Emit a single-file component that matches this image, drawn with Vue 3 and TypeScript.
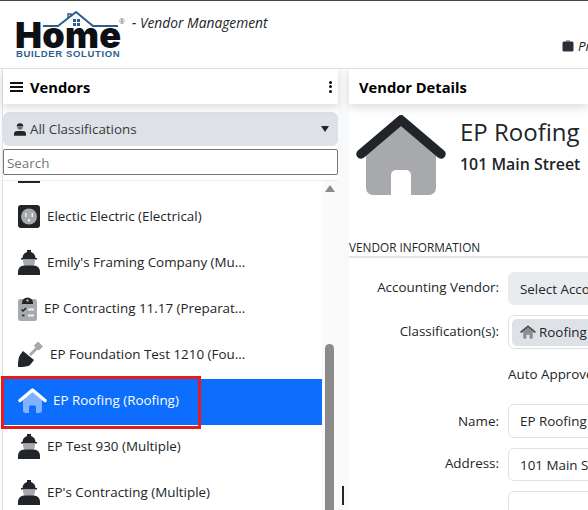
<script setup lang="ts">
type Row = { name: string; icon: string; gap: number; active?: boolean }
const rows: Row[] = [
  { name: 'Eagle Electric (Electrical)', icon: 'worker', gap: 7 },
  { name: 'Electic Electric (Electrical)', icon: 'outlet', gap: 7 },
  { name: "Emily's Framing Company (Mu...", icon: 'worker', gap: 7 },
  { name: 'EP Contracting 11.17 (Preparat...', icon: 'clipboard', gap: 7 },
  { name: 'EP Foundation Test 1210 (Fou...', icon: 'shovel', gap: 7 },
  { name: 'EP Roofing (Roofing)', icon: 'house', gap: 6, active: true },
  { name: 'EP Test 930 (Multiple)', icon: 'worker', gap: 7 },
  { name: "EP's Contracting (Multiple)", icon: 'worker', gap: 7 },
]
</script>

<template>
  <div class="page">
    <header class="top">
      <div class="logo">
        <div class="logo-word">Home</div>
        <svg class="roof" viewBox="0 0 110 22" width="110" height="22">
          <path d="M3 16H18L36 2L53 16H78" fill="none" stroke="#2a5f90" stroke-width="2" />
          <path d="M28 8V4H31V6" fill="none" stroke="#2a5f90" stroke-width="1.500" />
          <path d="M33 9h3v3h-3zM37 9h3v3h-3zM33 13h3v3h-3zM37 13h3v3h-3z" fill="#2a5f90" />
        </svg>
        <div class="logo-sub">BUILDER SOLUTION</div>
        <span class="reg">®</span>
      </div>
      <div class="app-title">- Vendor Management</div>
      <div class="top-right">
        <svg class="case" viewBox="0 0 12 12" width="12" height="12">
          <path d="M4 0h4v3H4z" fill="#a7a9ac" />
          <rect x="0.500" y="1.500" width="11" height="10" rx="1.500" fill="#2b3038" />
        </svg>
        <i>Projects</i>
      </div>
    </header>

    <main class="body">
      <section class="left">
        <div class="panel-head">
          <span class="burger"><b></b><b></b><b></b></span>
          <strong>Vendors</strong>
          <span class="dots"><b></b><b></b><b></b></span>
        </div>
        <div class="filter">
          <svg viewBox="0 0 22 25" width="12" height="14">
            <path d="M5 8a6 6 0 0 1 12 0z" fill="#212529" />
            <path d="M6 9h10a5 5 0 0 1-10 0z" fill="#6c7075" />
            <path d="M0 25v-3a6 6 0 0 1 6-6h10a6 6 0 0 1 6 6v3z" fill="#212529" />
          </svg>
          <span>All Classifications</span>
          <i class="caret"></i>
        </div>
        <input class="search" placeholder="Search" />
        <div class="list-wrap">
          <div class="list">
            <div v-for="r in rows" :key="r.name" class="row" :class="{ active: r.active }">
              <svg v-if="r.icon === 'worker'" viewBox="0 0 22 25" width="22" height="25">
                <path d="M4.500 8a6.500 6.500 0 0 1 4.500-6V0h4v2a6.500 6.500 0 0 1 4.500 6h1.500v1.500H3V8z" fill="#212529" />
                <path d="M5 9.500h12v2a6 6 0 0 1-12 0z" fill="#a7a9ac" />
                <path d="M0 25v-3.500a6 6 0 0 1 6-6h10a6 6 0 0 1 6 6V25z" fill="#212529" />
              </svg>
              <svg v-else-if="r.icon === 'outlet'" viewBox="0 0 22 23" width="22" height="23">
                <rect width="22" height="23" rx="3" fill="#212529" />
                <circle cx="11" cy="11.500" r="8" fill="#a7a9ac" />
                <path d="M7 8h1.500v4H7zM13.500 8H15v4h-1.500zM10 14h2v2.500h-2z" fill="#eee" />
              </svg>
              <svg v-else-if="r.icon === 'clipboard'" viewBox="0 0 19 25" width="19" height="25">
                <rect y="3" width="19" height="22" rx="2.500" fill="#a7a9ac" />
                <path d="M4 7a5.500 5.500 0 0 1 11 0v1H4z" fill="#212529" />
                <circle cx="9.500" cy="4.500" r="1.300" fill="#a7a9ac" />
                <path d="M3.500 13.500l1.500 1.500 3-3M4 19.500h2.500" fill="none" stroke="#212529" stroke-width="1.500" />
                <path d="M10 13.500h6M10 19.500h6" stroke="#eee" stroke-width="1.800" />
              </svg>
              <svg v-else-if="r.icon === 'shovel'" viewBox="0 0 25 25" width="25" height="25">
                <path d="M12 13L20 5" stroke="#a7a9ac" stroke-width="3" />
                <path d="M16.500 3.500L20 0l4.500 4.500L21 8l-2-1z" fill="#a7a9ac" stroke="#a7a9ac" stroke-width="1" />
                <path d="M5 9l11 9-4 5c-3 2-9 2-12 2 0-4 0-9 2-12z" fill="#212529" />
              </svg>
              <svg v-else viewBox="0 0 29 25" width="29" height="25">
                <path d="M5 12L14.500 3.500L24 12V22a3 3 0 0 1-3 3h-3v-6a1.500 1.500 0 0 0-1.500-1.500h-4A1.500 1.500 0 0 0 11 19v6H8a3 3 0 0 1-3-3z" fill="#7fb2ff" />
                <path d="M2 12.500L14.500 2L27 12.500" fill="none" stroke="#fff" stroke-width="3.500" stroke-linecap="round" stroke-linejoin="round" />
              </svg>
              <span :style="{ marginLeft: r.gap + 'px' }">{{ r.name }}</span>
            </div>
          </div>
          <div class="track">
            <i class="arrow"></i>
            <div class="thumb"></div>
          </div>
        </div>
        <div class="callout"></div>
      </section>

      <section class="right">
        <div class="panel-head"><strong>Vendor Details</strong></div>
        <div class="hero">
          <svg viewBox="0 0 90 80" width="90" height="80">
            <path d="M10 34L45 6L80 34V73a7 7 0 0 1-7 7H55V60a5 5 0 0 0-5-5H40a5 5 0 0 0-5 5v20H17a7 7 0 0 1-7-7z" fill="#a7a9ac" />
            <path d="M5 39L45 5L85 39" fill="none" stroke="#212529" stroke-width="9.500" stroke-linecap="round" stroke-linejoin="round" />
          </svg>
          <div class="hero-text">
            <h1>EP Roofing</h1>
            <p>101 Main Street</p>
          </div>
        </div>
        <h2 class="section">VENDOR INFORMATION</h2>
        <div class="form">
          <div class="f-row"><label class="l1">Accounting Vendor:</label><div class="ctl grey">Select Accounting Vendor</div></div>
          <div class="f-row">
            <label class="l2">Classification(s):</label>
            <div class="ctl box">
              <span class="chip">
                <svg viewBox="0 0 20 17" width="16" height="14">
                  <path d="M4 8L10 3L16 8V15.500a1.500 1.500 0 0 1-1.500 1.500H12v-5H8v5H5.500A1.500 1.500 0 0 1 4 15.500z" fill="#8a8d91" />
                  <path d="M1.500 8.500L10 1.500L18.500 8.500" fill="none" stroke="#495057" stroke-width="2.200" stroke-linecap="round" />
                </svg>
                Roofing
              </span>
            </div>
          </div>
          <div class="f-row auto"><label></label><span>Auto Approve</span></div>
          <div class="f-row name-row"><label class="l3">Name:</label><div class="ctl">EP Roofing</div></div>
          <div class="f-row addr-row"><label class="l1">Address:</label><div class="ctl">101 Main Street</div></div>
          <div class="f-row"><label></label><div class="ctl"></div></div>
        </div>
      </section>
    </main>
    <div class="cursor"></div>
  </div>
</template>

<style>
html, body { margin: 0; overflow: hidden; background: #fff; }
</style>

<style scoped>
.page {
  position: relative;
  width: 588px;
  height: 510px;
  overflow: hidden;
  font-family: "Open Sans", "Noto Sans", sans-serif;
  font-size: 13.4px;
  color: #212529;
  box-sizing: border-box;
  border-top: 1px solid #444;
}
.top {
  display: flex;
  height: 67px;
  border-bottom: 1px solid #e2e3e5;
  box-sizing: content-box;
}
.logo {
  position: relative;
  width: 108px;
  margin-left: 15px;
  flex: none;
}
.roof { position: absolute; left: 25px; top: 9px; }
.logo-word {
  position: absolute;
  left: 0;
  top: 12px;
  font: 900 36px/44px Inter, sans-serif;
  letter-spacing: 0.3px;
  color: #0d1014;
}
.logo-sub {
  position: absolute;
  left: 1px;
  top: 48px;
  font: 700 9.500px/10px "Liberation Sans", sans-serif;
  letter-spacing: 0.65px;
  color: #2a5f90;
  white-space: nowrap;
}
.reg { position: absolute; left: 104px; top: 17px; font-size: 7px; line-height: 8px; color: #666; }
.app-title {
  margin: 13px 0 0 9px;
  font-style: italic;
  font-size: 13.800px;
  line-height: 18px;
  white-space: nowrap;
}
.top-right {
  display: flex;
  align-items: center;
  gap: 4px;
  margin-left: auto;
  width: 26px;
  flex: none;
  overflow: hidden;
  height: 18px;
  margin-top: 36px;
  white-space: nowrap;
}
.case { flex: none; }
.body { display: flex; height: 441px; background: #f8f9fa; }
.left {
  position: relative;
  width: 336px;
  margin-left: 2px;
  flex: none;
  background: #fff;
  border-left: 1px solid #dee2e6;
  box-sizing: border-box;
}
.panel-head {
  position: relative;
  display: flex;
  align-items: center;
  height: 35px;
  background: #fff;
  box-shadow: 0 4px 8px rgba(0, 0, 0, 0.13);
  font-size: 14.700px;
  color: #000;
}
.left .panel-head { padding-left: 7px; gap: 7px; }
.right .panel-head { padding-left: 10px; }
.burger { display: flex; flex-direction: column; gap: 2px; }
.burger b { display: block; width: 13px; height: 2px; background: #111; }
.dots { display: flex; flex-direction: column; gap: 1.500px; margin-left: auto; margin-right: 6px; }
.dots b { display: block; width: 3px; height: 3px; border-radius: 50%; background: #111; }
.filter {
  display: flex;
  align-items: center;
  gap: 4px;
  height: 34px;
  margin: 8px 0 0 0;
  padding-left: 11px;
  background: #dee2e6;
  border-radius: 6px;
  color: #343a40;
}
.caret {
  margin-left: auto;
  margin-right: 9px;
  border: 4.500px solid transparent;
  border-top: 6px solid #212529;
  border-bottom: 0;
}
.search {
  display: block;
  width: 335px;
  height: 26px;
  margin-top: 3px;
  padding: 1px 3px 0;
  border: 1px solid #767676;
  border-radius: 2px;
  box-sizing: border-box;
  font: inherit;
  outline: none;
}
.search::placeholder { color: #757575; }
.list-wrap {
  display: flex;
  height: 330px;
  margin-top: 5px;
  border-top: 1px solid #e9ecef;
  overflow: hidden;
}
.list { width: 319px; flex: none; margin-top: -32px; }
.row {
  display: flex;
  align-items: center;
  height: 46px;
  box-sizing: border-box;
  padding: 0 0 4px 15px;
  white-space: nowrap;
  font-size: 13.400px;
}
.row.active { background: #0d6efd; color: #fff; }
.row svg { flex: none; }
.track {
  position: relative;
  width: 16px;
  background: #fafafa;
}
.arrow {
  position: absolute;
  left: 3px;
  top: 4px;
  border: 5px solid transparent;
  border-bottom: 7px solid #8b8b8b;
  border-top: 0;
}
.thumb {
  position: absolute;
  left: 3px;
  top: 163px;
  bottom: -10px;
  width: 9px;
  border-radius: 5px;
  background: #8b8b8b;
}
.callout {
  position: absolute;
  left: -2px;
  top: 307px;
  width: 200px;
  height: 53px;
  border: 3px solid #e61c1c;
  box-sizing: border-box;
}
.right {
  margin-left: 11px;
  flex: 1;
  min-width: 0;
  background: #fff;
}
.hero { display: flex; padding: 11px 0 0 7px; height: 126px; box-sizing: border-box; }
.hero-text { margin-left: 14px; }
.hero h1 { margin: 0; font-weight: 400; font-size: 24px; line-height: 33px; white-space: nowrap; }
.hero p { margin: 5px 0 0; font-size: 15.900px; font-weight: 600; line-height: 22px; white-space: nowrap; }
.section {
  margin: 10px 0 0;
  height: 15px;
  font-weight: 400;
  font-size: 11.800px;
  line-height: 15px;
  border-bottom: 2px solid #e5e5e5;
  padding-bottom: 1px;
}
.form { display: flex; flex-direction: column; margin-top: 14px; }
.f-row { display: flex; gap: 9px; margin-bottom: 10px; white-space: nowrap; }
.f-row label { width: 150px; flex: none; text-align: right; line-height: 18px; }
.l1 { margin-top: 6px; }
.l2 { margin-top: 7px; }
.l3 { margin-top: 8px; }
.ctl {
  width: 300px;
  height: 34px;
  flex: none;
  padding: 0 11px;
  display: flex;
  align-items: center;
  box-sizing: border-box;
  border: 1px solid #dee2e6;
  border-radius: 6px;
}
.grey { background: #e9ecef; border-color: #e9ecef; height: 33px; }
.box { padding: 0 3px; height: 34px; }
.chip {
  display: flex;
  align-items: center;
  gap: 3px;
  height: 27px;
  padding: 0 8px;
  width: 200px;
  background: #dee2e6;
  border-radius: 5px;
}
.auto { height: 30px; margin-bottom: 15px; align-items: center; }
.addr-row .ctl { height: 33px; }
.cursor {
  position: absolute;
  left: 342px;
  top: 485px;
  width: 2px;
  height: 19px;
  background: #222;
}
</style>
